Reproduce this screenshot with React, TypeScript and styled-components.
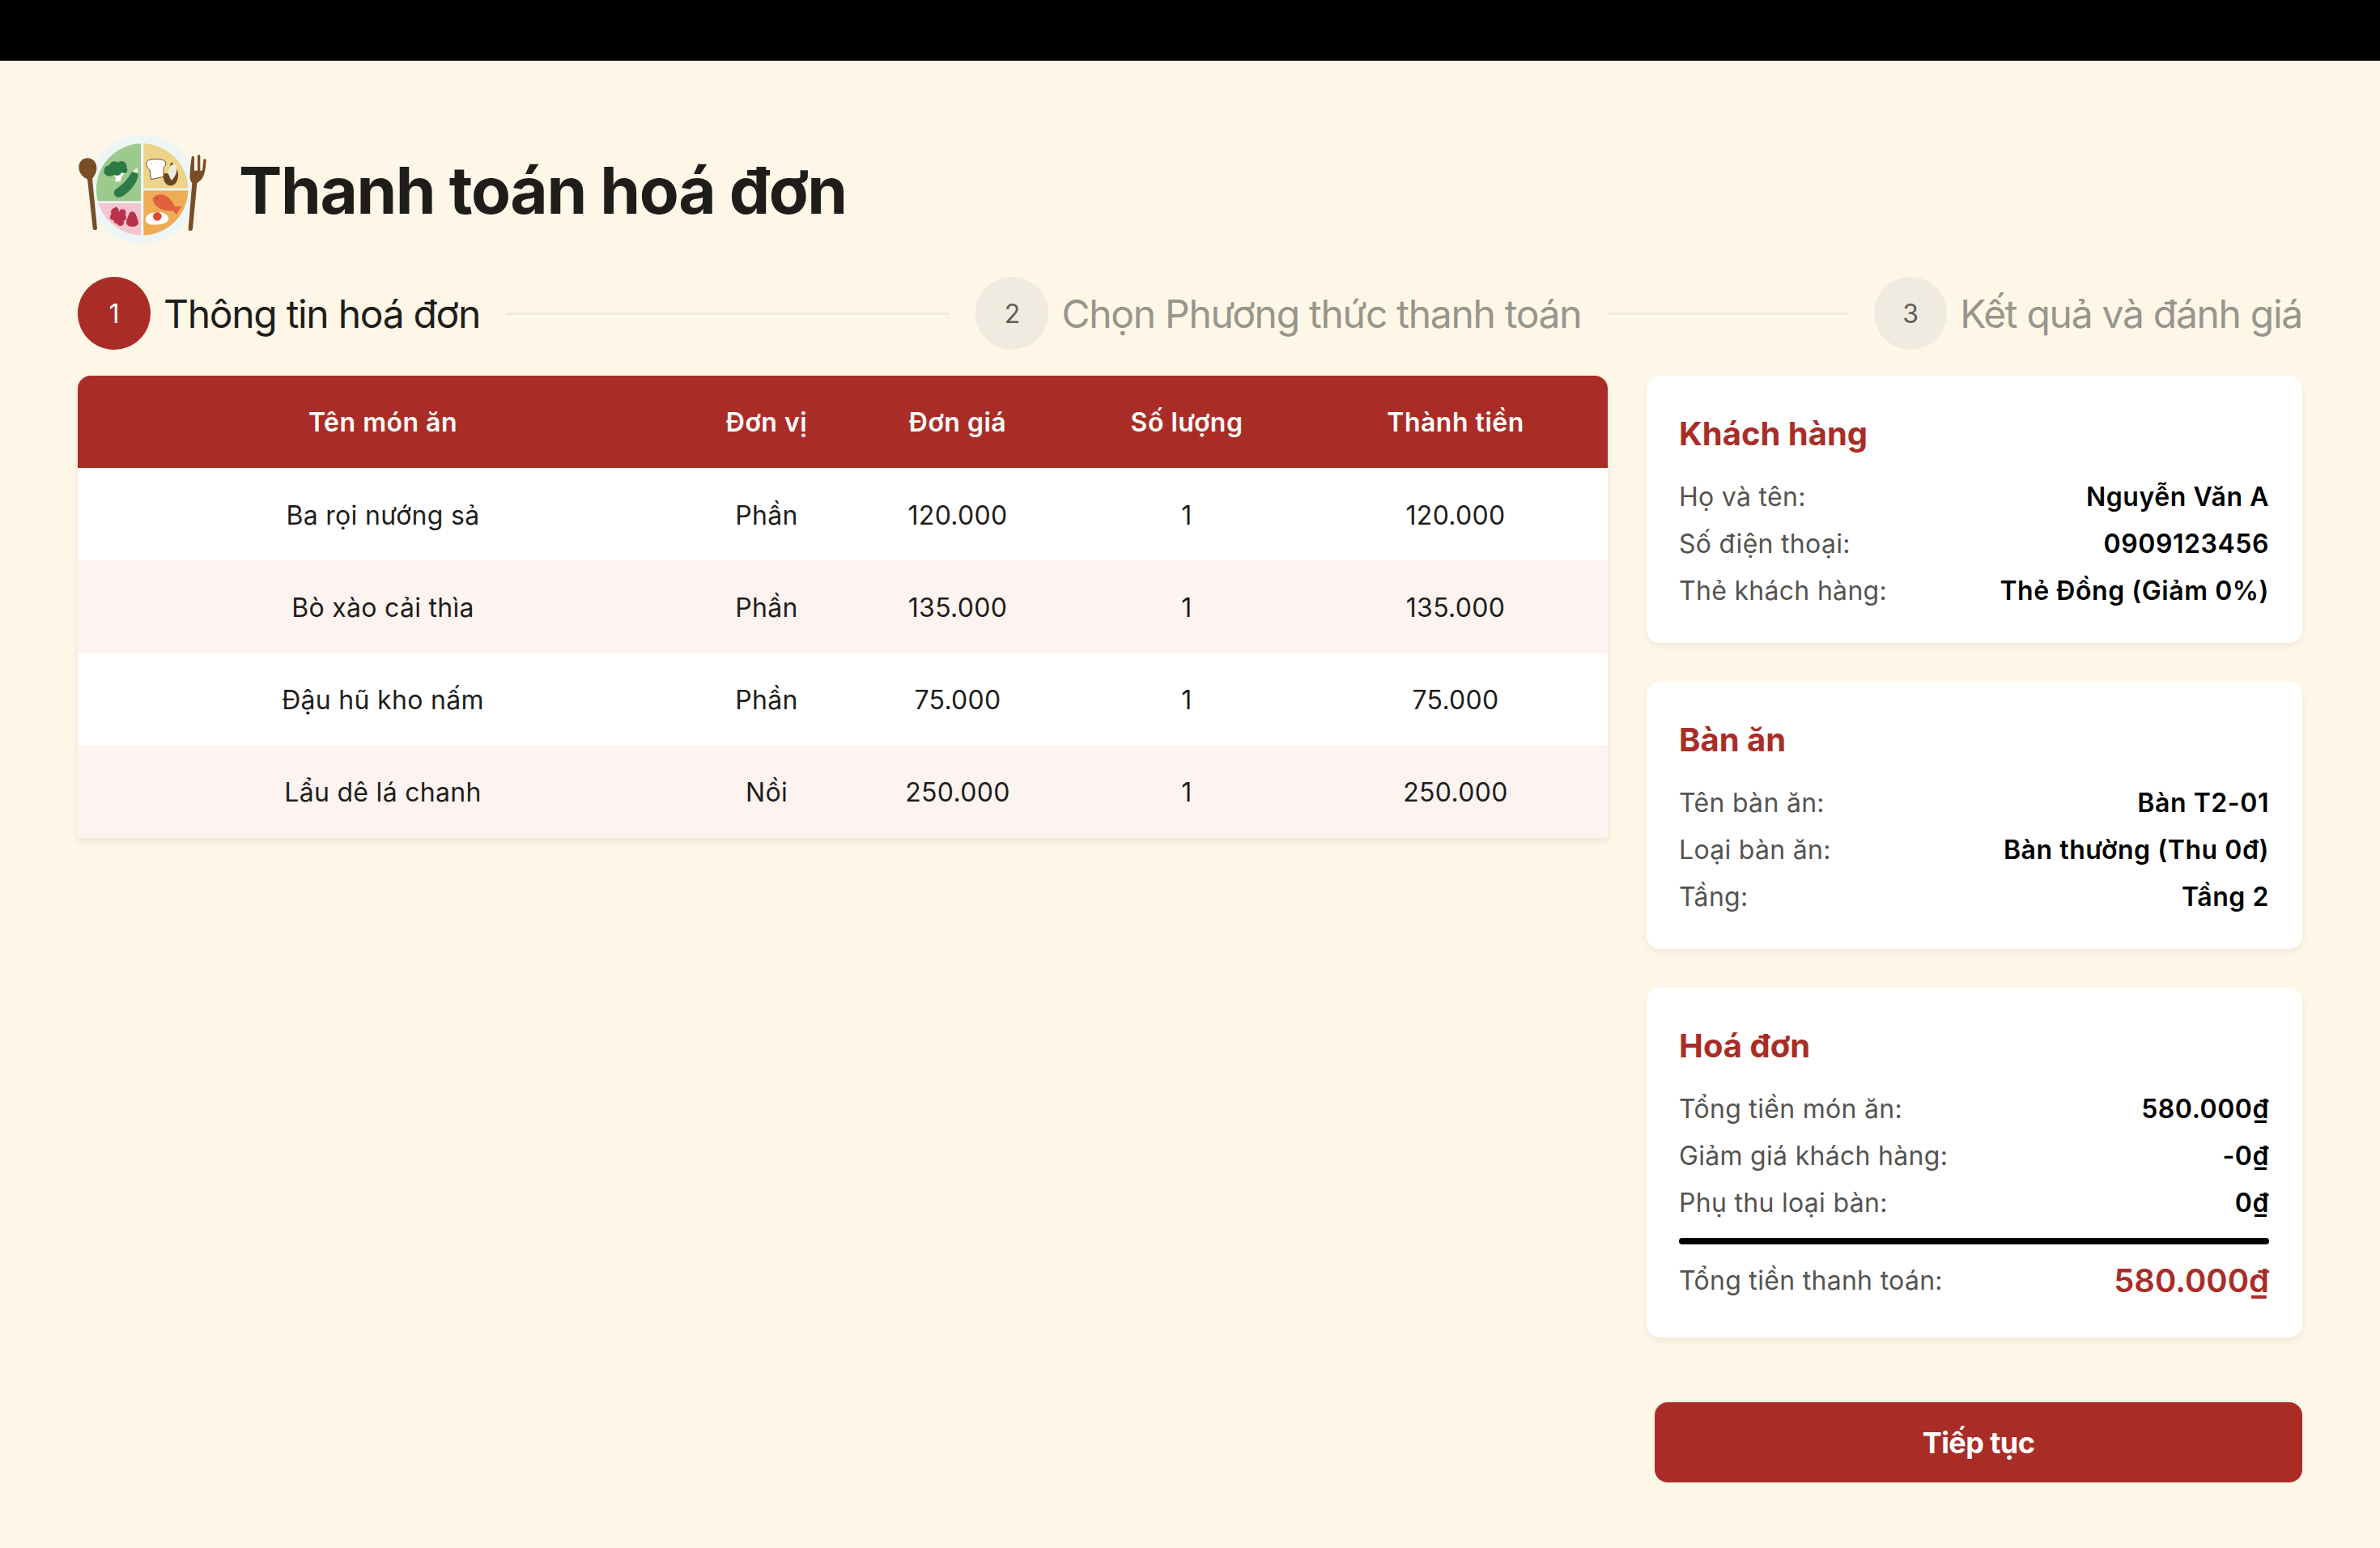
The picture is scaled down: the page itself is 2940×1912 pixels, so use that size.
import * as React from 'react'
import styled, { createGlobalStyle } from 'styled-components'

const RED = '#a92d26'

const GlobalStyle = createGlobalStyle`
  html, body {
    margin: 0;
    padding: 0;
    background: #fef7e8;
    font-family: 'Inter', 'Noto Sans', sans-serif;
    color: #1f1d1a;
  }
  * { box-sizing: border-box; }
`

const Page = styled.div`
  width: 2940px;
  height: 1912px;
  background: #fef7e8;
  overflow: hidden;
`
const TopBar = styled.div`
  height: 75px;
  background: #000;
`
const Content = styled.div`
  padding: 90px 96px 0;
`
const Header = styled.header`
  display: flex;
  align-items: center;
  gap: 33px;
  height: 140px;
`
const Title = styled.h1`
  margin: 0;
  font-size: 80px;
  line-height: 96px;
  font-weight: 700;
  letter-spacing: -1.4px;
  color: #1f1d1a;
`
const Stepper = styled.div`
  display: flex;
  align-items: center;
  margin-top: 37px;
  height: 90px;
`
const Step = styled.div`
  display: flex;
  align-items: center;
  gap: 16px;
  flex: none;
`
const StepCircle = styled.div<{ $active: boolean }>`
  width: 90px;
  height: 90px;
  border-radius: 50%;
  display: flex;
  align-items: center;
  justify-content: center;
  font-size: 32px;
  background: ${p => (p.$active ? RED : '#f0ebe0')};
  color: ${p => (p.$active ? '#fff' : '#5f5c55')};
`
const StepLabel = styled.span<{ $active: boolean }>`
  font-size: 48px;
  line-height: 60px;
  padding-top: 2px;
  letter-spacing: -1.3px;
  color: ${p => (p.$active ? '#1f1d1a' : '#98958c')};
`
const Connector = styled.div<{ $grow: number }>`
  flex: ${p => p.$grow} 1 0;
  height: 3px;
  margin: 0 32px;
  background: #f0ebe0;
`
const Main = styled.main`
  display: flex;
  align-items: flex-start;
  gap: 48px;
  margin-top: 32px;
`
const TableCard = styled.table`
  width: 1890px;
  flex: none;
  table-layout: fixed;
  border-collapse: separate;
  border-spacing: 0;
  border-radius: 16px 16px 0 0;
  overflow: hidden;
  background: #fff;
  box-shadow: 0 4px 8px rgba(0, 0, 0, 0.08);
`
const HeadCell = styled.th`
  height: 114px;
  background: ${RED};
  color: #fff;
  font-size: 32px;
  font-weight: 600;
  letter-spacing: 0.5px;
  text-align: center;
  padding: 0;
`
const Row = styled.tr<{ $alt: boolean }>`
  background: ${p => (p.$alt ? '#fdf3f1' : '#fff')};
`
const Cell = styled.td`
  height: 114.25px;
  font-size: 32px;
  font-weight: 400;
  letter-spacing: 0.3px;
  text-align: center;
  padding: 2px 0 0;
  color: #1f1d1a;
`
const Side = styled.aside`
  width: 810px;
  flex: none;
  display: flex;
  flex-direction: column;
  gap: 48px;
`
const Card = styled.section`
  background: #fff;
  border-radius: 16px;
  padding: 44px 41px 36px 40px;
  box-shadow: 0 4px 8px rgba(0, 0, 0, 0.06);
`
const CardTitle = styled.h2`
  margin: 0 0 20px;
  font-size: 40px;
  line-height: 56px;
  font-weight: 700;
  color: ${RED};
`
const InfoRow = styled.div`
  display: flex;
  justify-content: space-between;
  align-items: center;
  height: 58px;
`
const InfoLabel = styled.span`
  font-size: 32px;
  letter-spacing: 0.3px;
  color: #55534f;
`
const InfoValue = styled.span`
  font-size: 32px;
  font-weight: 600;
  letter-spacing: 0.55px;
  color: #000;
`
const Divider = styled.div`
  height: 8px;
  border-radius: 4px;
  background: #000;
  margin: 15px 0 12px;
`
const TotalRow = styled(InfoRow)`
  height: 64px;
  margin-bottom: 3px;
`
const TotalValue = styled.span`
  font-size: 40px;
  font-weight: 600;
  color: ${RED};
`
const ContinueButton = styled.button`
  align-self: flex-end;
  width: 800px;
  height: 99px;
  margin-top: 32px;
  border: 0;
  border-radius: 16px;
  background: ${RED};
  color: #fff;
  font-family: inherit;
  font-size: 36px;
  font-weight: 700;
  letter-spacing: -0.6px;
`

const PlateLogo: React.FC = () => (
  <svg width="166" height="140" viewBox="48 45 498 420" aria-hidden="true">
    <defs>
      <clipPath id="plate-inner">
        <circle cx="287" cy="252" r="170" />
      </clipPath>
    </defs>
    <circle cx="286" cy="252" r="203" fill="#edf5f5" />
    <g clipPath="url(#plate-inner)">
      <rect x="100" y="80" width="182" height="215" fill="#9cc98c" />
      <rect x="292" y="80" width="170" height="168" fill="#edd488" />
      <rect x="292" y="256" width="170" height="170" fill="#eeac55" />
      <rect x="100" y="303" width="182" height="125" fill="#f3c5d1" />
    </g>
    {/* broccoli */}
    <path d="M172 190 L190 208 L186 223 L206 223 L210 206 L226 188 Z" fill="#fff" />
    <g fill="#2c7a45">
      <circle cx="165" cy="183" r="20" />
      <circle cx="184" cy="168" r="20" />
      <circle cx="210" cy="167" r="20" />
      <circle cx="194" cy="184" r="17" />
      <circle cx="220" cy="180" r="12" />
      <circle cx="180" cy="186" r="14" />
    </g>
    {/* cucumber */}
    <path d="M184 272 C178 258 190 250 204 240 C222 226 238 206 248 188 C256 180 270 186 272 200 C268 228 240 262 212 278 C202 284 190 282 184 272 Z" fill="#2c7a45" />
    <path d="M250 186 L266 172 L272 178 L268 192 Z" fill="#e8f0e4" />
    {/* bread */}
    <path d="M303 152 C305 142 318 140 342 140 C364 140 376 146 374 158 C372 166 366 168 366 174 L366 205 L320 215 L315 180 C307 174 301 164 303 152 Z" fill="#fff" stroke="#6e4a2b" strokeWidth="3" />
    <g fill="#c9b78a">
      <circle cx="322" cy="156" r="2" />
      <circle cx="338" cy="152" r="2" />
      <circle cx="354" cy="154" r="2" />
    </g>
    {/* corn */}
    <path d="M366 202 C368 190 378 188 386 198 C388 182 388 166 394 152 C408 156 418 172 420 192 C422 216 412 238 392 238 C376 238 364 222 366 202 Z" fill="#6b4423" />
    <path d="M386 178 C390 160 408 150 414 166 C420 184 408 208 396 218 C388 208 382 194 386 178 Z" fill="#efeadf" />
    {/* fish */}
    <path d="M326 288 C332 270 366 262 388 286 C398 296 404 306 408 316 L434 314 L420 332 L416 346 L400 330 C372 336 332 322 326 288 Z" fill="#e1613f" />
    <circle cx="342" cy="286" r="3" fill="#a83a24" />
    {/* egg */}
    <path d="M300 360 C302 340 330 334 354 336 C376 338 390 354 382 368 C372 382 330 386 312 380 C304 376 298 368 300 360 Z" fill="#fff" />
    <circle cx="343" cy="352" r="16" fill="#e1492f" />
    {/* grapes and pear */}
    <g fill="#b8324a">
      <circle cx="186" cy="336" r="15" />
      <circle cx="180" cy="354" r="12" />
      <circle cx="198" cy="352" r="16" />
      <circle cx="214" cy="338" r="13" />
      <circle cx="216" cy="356" r="12" />
      <circle cx="206" cy="374" r="13" />
      <circle cx="192" cy="368" r="10" />
      <path d="M250 334 C262 334 266 352 270 364 C278 380 270 390 250 390 C232 390 224 380 230 364 C236 352 238 334 250 334 Z" />
      <path d="M182 322 L192 316 L200 326 L188 332 Z" />
    </g>
    {/* spoon */}
    <path d="M84 136 C106 136 120 154 118 176 C116 194 108 204 102 212 L120 396 C120 404 106 406 104 396 L84 214 C66 206 52 190 52 170 C52 150 66 136 84 136 Z" fill="#7a4d27" />
    {/* fork */}
    <path d="M464 196 C464 180 468 146 470 132 C472 126 480 128 480 134 L480 182 L492 182 L492 128 C492 122 502 122 502 128 L502 182 L510 182 L514 142 C514 136 524 138 524 144 C522 170 520 196 510 210 C504 220 494 224 490 230 L474 398 C472 408 458 406 458 398 L472 228 C464 220 463 208 464 196 Z" fill="#7a4d27" />
  </svg>
)

const columns = [
  { title: 'Tên món ăn', width: 754 },
  { title: 'Đơn vị', width: 194 },
  { title: 'Đơn giá', width: 278 },
  { title: 'Số lượng', width: 288 },
  { title: 'Thành tiền', width: 376 },
]

const dishes = [
  ['Ba rọi nướng sả', 'Phần', '120.000', '1', '120.000'],
  ['Bò xào cải thìa', 'Phần', '135.000', '1', '135.000'],
  ['Đậu hũ kho nấm', 'Phần', '75.000', '1', '75.000'],
  ['Lẩu dê lá chanh', 'Nồi', '250.000', '1', '250.000'],
]

const InfoCard: React.FC<{ title: string; rows: string[][]; children?: React.ReactNode }> = ({ title, rows, children }) => (
  <Card>
    <CardTitle>{title}</CardTitle>
    {rows.map(([label, value]) => (
      <InfoRow key={label}>
        <InfoLabel>{label}</InfoLabel>
        <InfoValue>{value}</InfoValue>
      </InfoRow>
    ))}
    {children}
  </Card>
)

export default function App() {
  return (
    <Page>
      <GlobalStyle />
      <TopBar />
      <Content>
        <Header>
          <PlateLogo />
          <Title>Thanh toán hoá đơn</Title>
        </Header>
        <Stepper>
          <Step>
            <StepCircle $active>1</StepCircle>
            <StepLabel $active>Thông tin hoá đơn</StepLabel>
          </Step>
          <Connector $grow={547} />
          <Step>
            <StepCircle $active={false}>2</StepCircle>
            <StepLabel $active={false}>Chọn Phương thức thanh toán</StepLabel>
          </Step>
          <Connector $grow={297} />
          <Step>
            <StepCircle $active={false}>3</StepCircle>
            <StepLabel $active={false}>Kết quả và đánh giá</StepLabel>
          </Step>
        </Stepper>
        <Main>
          <TableCard>
            <colgroup>
              {columns.map(c => (
                <col key={c.title} width={c.width} />
              ))}
            </colgroup>
            <thead>
              <tr>
                {columns.map(c => (
                  <HeadCell key={c.title}>{c.title}</HeadCell>
                ))}
              </tr>
            </thead>
            <tbody>
              {dishes.map((d, i) => (
                <Row key={d[0]} $alt={i % 2 === 1}>
                  {d.map((v, j) => (
                    <Cell key={j}>{v}</Cell>
                  ))}
                </Row>
              ))}
            </tbody>
          </TableCard>
          <Side>
            <InfoCard
              title="Khách hàng"
              rows={[
                ['Họ và tên:', 'Nguyễn Văn A'],
                ['Số điện thoại:', '0909123456'],
                ['Thẻ khách hàng:', 'Thẻ Đồng (Giảm 0%)'],
              ]}
            />
            <InfoCard
              title="Bàn ăn"
              rows={[
                ['Tên bàn ăn:', 'Bàn T2-01'],
                ['Loại bàn ăn:', 'Bàn thường (Thu 0đ)'],
                ['Tầng:', 'Tầng 2'],
              ]}
            />
            <InfoCard
              title="Hoá đơn"
              rows={[
                ['Tổng tiền món ăn:', '580.000₫'],
                ['Giảm giá khách hàng:', '-0₫'],
                ['Phụ thu loại bàn:', '0₫'],
              ]}
            >
              <Divider />
              <TotalRow>
                <InfoLabel>Tổng tiền thanh toán:</InfoLabel>
                <TotalValue>580.000₫</TotalValue>
              </TotalRow>
            </InfoCard>
            <ContinueButton>Tiếp tục</ContinueButton>
          </Side>
        </Main>
      </Content>
    </Page>
  )
}
